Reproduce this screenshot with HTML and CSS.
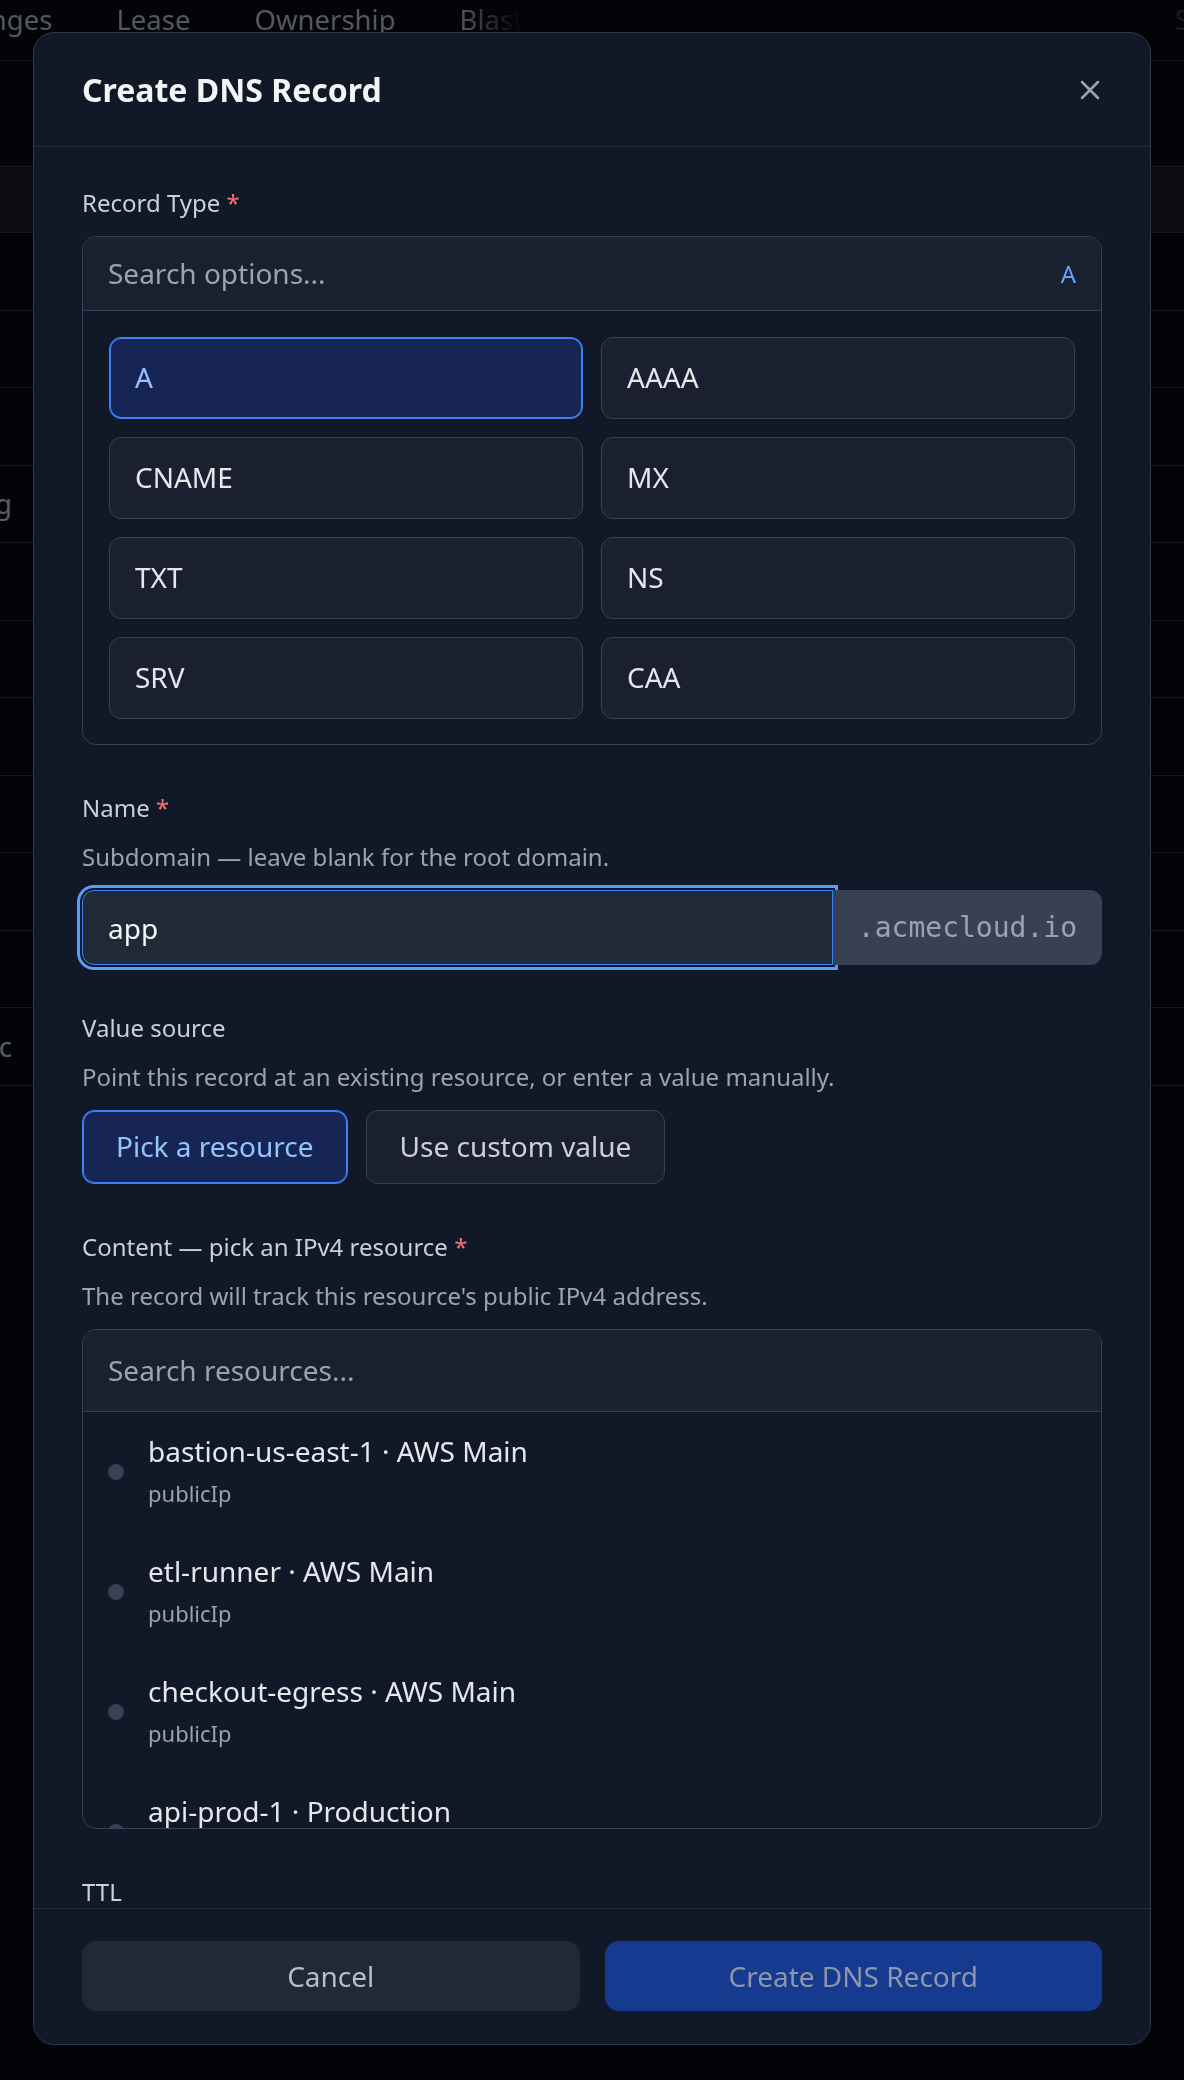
FILE: index.html
```html
<!DOCTYPE html>
<html lang="en">
  <head>
    <meta charset="UTF-8" />
    <meta name="viewport" content="width=device-width, initial-scale=1.0" />
    <title>Create DNS Record</title>
    <link rel="stylesheet" href="styles.css">
  </head>
  <body>
    <div class="page">
      <div class="topbar">
        <nav class="tabs">
          <span class="tab">Changes</span>
          <span class="tab">Lease</span>
          <span class="tab">Ownership</span>
          <span class="tab">Blast radius</span>
        </nav>
        <span class="topbar-action">Sync</span>
      </div>
      <div class="toolbar"></div>
      <div class="thead"></div>
      <div class="row"><span class="cell-name"></span></div>
      <div class="row"><span class="cell-name"></span></div>
      <div class="row"><span class="cell-name"></span></div>
      <div class="row"><span class="cell-name">staging</span></div>
      <div class="row"><span class="cell-name"></span></div>
      <div class="row"><span class="cell-name"></span></div>
      <div class="row"><span class="cell-name"></span></div>
      <div class="row"><span class="cell-name"></span></div>
      <div class="row"><span class="cell-name"></span></div>
      <div class="row"><span class="cell-name"></span></div>
      <div class="row"><span class="cell-name">public</span></div>
    </div>

    <div class="overlay">
      <div class="modal" role="dialog" aria-labelledby="modal-title">
        <div class="modal-header">
          <h2 id="modal-title">Create DNS Record</h2>
          <button class="close-btn" aria-label="Close">
            <svg width="20" height="20" viewBox="0 0 20 20" fill="none" stroke="currentColor" stroke-width="2.5" stroke-linecap="round">
              <path d="M2 2l16 16M18 2L2 18" />
            </svg>
          </button>
        </div>

        <div class="modal-body">
          <div class="field">
            <label class="label">Record Type <span class="req">*</span></label>
            <div class="picker">
              <div class="picker-search">
                <input class="picker-input" type="text" placeholder="Search options..." />
                <span class="picker-value">A</span>
              </div>
              <div class="type-grid">
                <button class="type-option selected">A</button>
                <button class="type-option">AAAA</button>
                <button class="type-option">CNAME</button>
                <button class="type-option">MX</button>
                <button class="type-option">TXT</button>
                <button class="type-option">NS</button>
                <button class="type-option">SRV</button>
                <button class="type-option">CAA</button>
              </div>
            </div>
          </div>

          <div class="field">
            <label class="label">Name <span class="req">*</span></label>
            <p class="hint">Subdomain — leave blank for the root domain.</p>
            <div class="name-group">
              <input class="text-input focused" type="text" value="app" />
              <span class="suffix">.acmecloud.io</span>
            </div>
          </div>

          <div class="field">
            <label class="label">Value source</label>
            <p class="hint">Point this record at an existing resource, or enter a value manually.</p>
            <div class="toggle-group">
              <button class="toggle active">Pick a resource</button>
              <button class="toggle">Use custom value</button>
            </div>
          </div>

          <div class="field">
            <label class="label">Content — pick an IPv4 resource <span class="req">*</span></label>
            <p class="hint">The record will track this resource's public IPv4 address.</p>
            <div class="picker">
              <div class="picker-search tall">
                <input class="picker-input" type="text" placeholder="Search resources..." />
              </div>
              <div class="resource-list">
                <div class="resource">
                  <span class="dot"></span>
                  <div>
                    <div class="resource-name">bastion-us-east-1 · AWS Main</div>
                    <div class="resource-field">publicIp</div>
                  </div>
                </div>
                <div class="resource">
                  <span class="dot"></span>
                  <div>
                    <div class="resource-name">etl-runner · AWS Main</div>
                    <div class="resource-field">publicIp</div>
                  </div>
                </div>
                <div class="resource">
                  <span class="dot"></span>
                  <div>
                    <div class="resource-name">checkout-egress · AWS Main</div>
                    <div class="resource-field">publicIp</div>
                  </div>
                </div>
                <div class="resource">
                  <span class="dot"></span>
                  <div>
                    <div class="resource-name">api-prod-1 · Production</div>
                    <div class="resource-field">publicIp</div>
                  </div>
                </div>
              </div>
            </div>
          </div>

          <div class="field">
            <label class="label">TTL</label>
            <p class="hint">How long resolvers may cache this record.</p>
          </div>
        </div>

        <div class="modal-footer">
          <button class="btn btn-cancel">Cancel</button>
          <button class="btn btn-primary" disabled>Create DNS Record</button>
        </div>
      </div>
    </div>
  </body>
</html>
```

FILE: styles.css
```css
html,
body {
  margin: 0;
  height: 2080px;
  overflow: hidden;
}
body {
  background-color: #080b12;
  font-family: "Noto Sans", "Open Sans", sans-serif;
  color: #e5e7eb;
}
button,
input {
  font-family: inherit;
}

/* page behind the dialog */
.page {
  height: 100%;
}
.topbar {
  display: flex;
  height: 61px;
  border-bottom: 1px solid #373e4e;
  box-sizing: border-box;
  overflow: hidden;
}
.tabs {
  display: flex;
  gap: 64px;
  width: 590px;
  margin-left: -60px;
  font-size: 27.5px;
  line-height: 40px;
  color: #d1d9e6;
  white-space: nowrap;
  -webkit-mask-image: linear-gradient(to right, #000 518px, transparent 582px);
  mask-image: linear-gradient(to right, #000 518px, transparent 582px);
}
.topbar-action {
  margin-left: auto;
  margin-right: -50px;
  font-size: 27.5px;
  line-height: 40px;
  color: #3f4550;
}
.toolbar {
  height: 105px;
}
.thead {
  height: 67px;
  background-color: #1a1f29;
  border-top: 1px solid #373e4e;
  border-bottom: 1px solid #373e4e;
  box-sizing: border-box;
}
.row {
  display: flex;
  align-items: center;
  height: 77.5px;
  border-bottom: 1px solid #373e4e;
  box-sizing: border-box;
}
.cell-name {
  display: flex;
  justify-content: flex-end;
  width: 12px;
  font-size: 27.5px;
  color: #e2e8f0;
  white-space: nowrap;
}

/* dialog */
.overlay {
  position: fixed;
  inset: 0;
  background-color: rgba(0, 0, 0, 0.6);
  display: flex;
  justify-content: center;
  align-items: flex-start;
  padding-top: 32px;
}
.modal {
  width: 1118px;
  height: 2013px;
  box-sizing: border-box;
  display: flex;
  flex-direction: column;
  background-color: #111827;
  border: 1px solid #2f3846;
  border-radius: 21px;
  overflow: hidden;
}
.modal-header {
  display: flex;
  align-items: center;
  justify-content: space-between;
  height: 114px;
  box-sizing: border-box;
  padding: 0 48px;
  border-bottom: 1px solid #222a37;
  flex-shrink: 0;
}
.modal-header h2 {
  margin: 0;
  font-size: 32px;
  font-weight: 700;
  color: #f3f4f6;
}
.close-btn {
  display: flex;
  padding: 0;
  margin-right: 2px;
  background: none;
  border: none;
  color: #9ca3af;
  cursor: pointer;
}
.modal-body {
  flex: 1;
  overflow: hidden;
  padding: 40px 48px 0;
}
.modal-footer {
  display: flex;
  gap: 25px;
  padding: 32px 48px 33px;
  border-top: 1px solid #222a37;
  flex-shrink: 0;
}

/* form fields */
.field {
  margin-bottom: 47px;
}
.label {
  display: block;
  font-size: 24px;
  line-height: 32px;
  color: #cbd0d8;
  margin-bottom: 17px;
}
.req {
  color: #f87171;
}
.hint {
  margin: 0 0 17px;
  font-size: 24px;
  line-height: 32px;
  color: #9ca3af;
}

.picker {
  border: 1px solid #374151;
  border-radius: 14px;
  overflow: hidden;
}
.picker-search {
  display: flex;
  align-items: center;
  height: 73px;
  padding: 0 25px;
  background-color: #19202f;
  border-bottom: 1px solid #374151;
}
.picker-search.tall {
  height: 81px;
}
.picker-input {
  flex: 1;
  padding: 0 0 2px;
  background: none;
  border: none;
  outline: none;
  font-size: 28px;
  color: #e5e7eb;
}
.picker-input::placeholder {
  color: #9ca3af;
}
.picker-value {
  font-size: 24px;
  color: #60a5fa;
}

.type-grid {
  display: grid;
  grid-template-columns: 1fr 1fr;
  gap: 18px;
  padding: 26px 26px 25px;
}
.type-option {
  height: 82px;
  padding: 0 25px 3px;
  text-align: left;
  font-size: 28px;
  color: #e5e7eb;
  background-color: #1a2030;
  border: 1px solid #384150;
  border-radius: 12px;
  cursor: pointer;
}
.type-option.selected {
  background-color: #172554;
  border-color: #3b82f6;
  box-shadow: inset 0 0 0 1px #3b82f6;
  color: #93c5fd;
}

.name-group {
  display: flex;
}
.text-input {
  flex: 1;
  height: 75px;
  box-sizing: border-box;
  padding: 0 25px;
  font-size: 28px;
  color: #f3f4f6;
  background-color: #1f2937;
  border: 1px solid #374151;
  border-radius: 12px 0 0 12px;
  outline: none;
}
.text-input.focused {
  border-color: #3b82f6;
  box-shadow: 0 0 0 2px #111827, 0 0 0 5px #5b9cf6;
}
.suffix {
  display: flex;
  align-items: center;
  padding: 0 25px;
  font-family: "DejaVu Sans Mono", monospace;
  font-size: 28px;
  color: #9ca3af;
  background-color: #374151;
  border-radius: 0 12px 12px 0;
}

.toggle-group {
  display: flex;
  gap: 18px;
}
.toggle {
  height: 74px;
  padding: 0 33px 2px;
  font-size: 28px;
  color: #cbd0d8;
  background-color: #1a2030;
  border: 1px solid #384150;
  border-radius: 12px;
  cursor: pointer;
}
.toggle.active {
  background-color: #172554;
  border-color: #3b82f6;
  box-shadow: inset 0 0 0 1px #3b82f6;
  color: #93c5fd;
}

.resource-list {
  height: 416px;
  overflow: hidden;
}
.resource {
  display: flex;
  align-items: center;
  gap: 24px;
  padding: 20px 25px 24px;
}
.dot {
  width: 16px;
  height: 16px;
  margin-top: 4px;
  border-radius: 50%;
  background-color: #374151;
  flex-shrink: 0;
}
.resource-name {
  font-size: 28px;
  line-height: 38px;
  color: #e5e7eb;
}
.resource-field {
  margin-top: 8px;
  font-size: 22px;
  line-height: 30px;
  color: #9ca3af;
}

.btn {
  flex: 1;
  height: 70px;
  font-size: 28px;
  border: none;
  border-radius: 14px;
  cursor: pointer;
}
.btn-cancel {
  background-color: #1f2937;
  color: #b8bec8;
}
.btn-primary {
  background-color: #153a8f;
  color: #8e97a8;
}
```
